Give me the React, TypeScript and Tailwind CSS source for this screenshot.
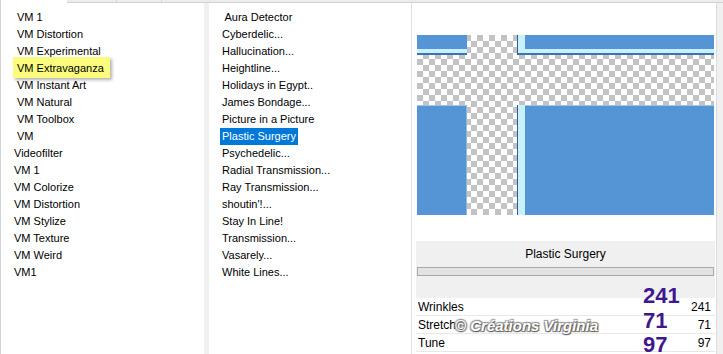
import React from "react";

const leftItems: { label: string; indent: boolean; marked?: boolean }[] = [
  { label: "VM 1", indent: true },
  { label: "VM Distortion", indent: true },
  { label: "VM Experimental", indent: true },
  { label: "VM Extravaganza", indent: true, marked: true },
  { label: "VM Instant Art", indent: true },
  { label: "VM Natural", indent: true },
  { label: "VM Toolbox", indent: true },
  { label: "VM", indent: true },
  { label: "Videofilter", indent: false },
  { label: "VM 1", indent: false },
  { label: "VM Colorize", indent: false },
  { label: "VM Distortion", indent: false },
  { label: "VM Stylize", indent: false },
  { label: "VM Texture", indent: false },
  { label: "VM Weird", indent: false },
  { label: "VM1", indent: false },
];

const filters = [
  " Aura Detector",
  "Cyberdelic...",
  "Hallucination...",
  "Heightline...",
  "Holidays in Egypt..",
  "James Bondage...",
  "Picture in a Picture",
  "Plastic Surgery",
  "Psychedelic...",
  "Radial Transmission...",
  "Ray Transmission...",
  "shoutin'!...",
  "Stay In Line!",
  "Transmission...",
  "Vasarely...",
  "White Lines...",
];

const sliders = [
  { name: "Wrinkles", value: 241 },
  { name: "Stretch", value: 71 },
  { name: "Tune", value: 97 },
];

function Preview() {
  return (
    <svg width="297" height="180" viewBox="0 0 297 180" className="block">
      <defs>
        <pattern id="checker" width="12" height="12" patternUnits="userSpaceOnUse">
          <rect width="12" height="12" fill="#ffffff" />
          <rect width="6" height="6" fill="#c3c3c3" />
          <rect x="6" y="6" width="6" height="6" fill="#c3c3c3" />
        </pattern>
      </defs>
      <rect width="297" height="180" fill="url(#checker)" />
      {/* top left */}
      <rect x="0" y="0" width="50" height="20" fill="#5595d5" />
      <rect x="0" y="14" width="50" height="4" fill="#c8f1fb" />
      <rect x="0" y="18" width="50" height="2" fill="#3d73b8" />
      {/* top right */}
      <rect x="100" y="0" width="197" height="20" fill="#5595d5" />
      <rect x="100" y="14" width="197" height="4" fill="#c8f1fb" />
      <rect x="100" y="18" width="197" height="2" fill="#3d73b8" />
      <rect x="101" y="0" width="7" height="18" fill="#c8f1fb" />
      <rect x="100" y="0" width="1" height="20" fill="#2d5a9c" />
      {/* bottom left */}
      <rect x="0" y="70" width="50" height="110" fill="#5595d5" />
      <rect x="0" y="70" width="50" height="1" fill="#9cc4e8" />
      <rect x="49" y="70" width="1" height="110" fill="#8fb8e2" />
      {/* bottom right */}
      <rect x="100" y="70" width="197" height="110" fill="#5595d5" />
      <rect x="100" y="70" width="197" height="1" fill="#9cc4e8" />
      <rect x="101" y="70" width="7" height="110" fill="#c8f1fb" />
      <rect x="100" y="70" width="1" height="110" fill="#2d5a9c" />
    </svg>
  );
}

export default function App() {
  return (
    <div className="relative w-[723px] h-[354px] overflow-hidden bg-[#f0f0f0] flex flex-col font-['Liberation_Sans',Arial,sans-serif] text-[11px] text-black">
      {/* top header strip */}
      <div className="flex h-[3px] shrink-0">
        <div className="w-[67px] bg-white border-l border-[#d4d4d4]" />
        <div className="flex-1 bg-[#ececec] border-b border-[#d2d2d2] flex">
          <div className="w-[50px] border-r border-[#d2d2d2]" />
          <div className="w-[45px] border-r border-[#d2d2d2]" />
        </div>
      </div>

      <div className="flex flex-1 min-h-0">
        {/* category list */}
        <div className="w-[204px] bg-white border-l border-[#d4d4d4] pt-[6px]">
          {leftItems.map((it, i) => (
            <div
              key={i}
              className={`h-[17px] leading-[17px] whitespace-nowrap ${it.indent ? "pl-[16px]" : "pl-[13px]"}`}
            >
              {it.marked ? (
                <span className="inline-block -ml-[4px] pl-[4px] pr-[6px] -mt-[3px] pt-[3px] pb-[1px] bg-[#fbfb7e] shadow-[2px_2px_3px_rgba(0,0,0,0.3)]">
                  {it.label}
                </span>
              ) : (
                it.label
              )}
            </div>
          ))}
        </div>

        <div className="w-[5px]" />

        {/* filter list */}
        <div className="w-[203px] bg-white border-r border-[#e2e2e2] pt-[6px]">
          {filters.map((f, i) => (
            <div key={i} className="h-[17px] leading-[17px] pl-[13px] whitespace-pre">
              {f === "Plastic Surgery" ? (
                <span className="inline-block -ml-[2px] pl-[2px] pr-[2px] bg-[#0078d7] text-white">
                  {f}
                </span>
              ) : (
                f
              )}
            </div>
          ))}
        </div>

        {/* preview + settings */}
        <div className="w-[305px] bg-white border-r border-[#dcdcdc] pt-[32px] pl-[4px]">
          <div className="ml-[1px]">
            <Preview />
          </div>
          <div className="mt-[26px] w-[299px] h-[57px] bg-[#f0f0f0] flex flex-col">
            <div className="h-[26px] flex items-center justify-center text-[12px]">Plastic Surgery</div>
            <div className="ml-[1px] w-[297px] h-[9px] bg-[#e2e2e2] border border-[#a8a8a8]" />
          </div>
          <div className="w-[299px]">
            {sliders.map((s) => (
              <div
                key={s.name}
                className="h-[18px] flex items-center justify-between pl-[2px] pr-[4px] border-b border-[#e8e8e8] text-[12px]"
              >
                <span>{s.name}</span>
                <span>{s.value}</span>
              </div>
            ))}
          </div>
        </div>
      </div>

      {/* annotations laid over the settings */}
      <div className="absolute left-[643px] top-[285px] text-[22px] leading-none font-bold text-[#3f1890]">241</div>
      <div className="absolute left-[643px] top-[310px] text-[22px] leading-none font-bold text-[#3f1890]">71</div>
      <div className="absolute left-[643px] top-[334px] text-[22px] leading-none font-bold text-[#3f1890]">97</div>
      <div className="absolute left-[455px] top-[318px] text-[15px] leading-none font-bold italic text-white [text-shadow:1px_1px_1px_#555,-1px_-1px_1px_#999,1px_-1px_1px_#888,-1px_1px_1px_#888]">
        © Créations Virginia
      </div>
    </div>
  );
}
